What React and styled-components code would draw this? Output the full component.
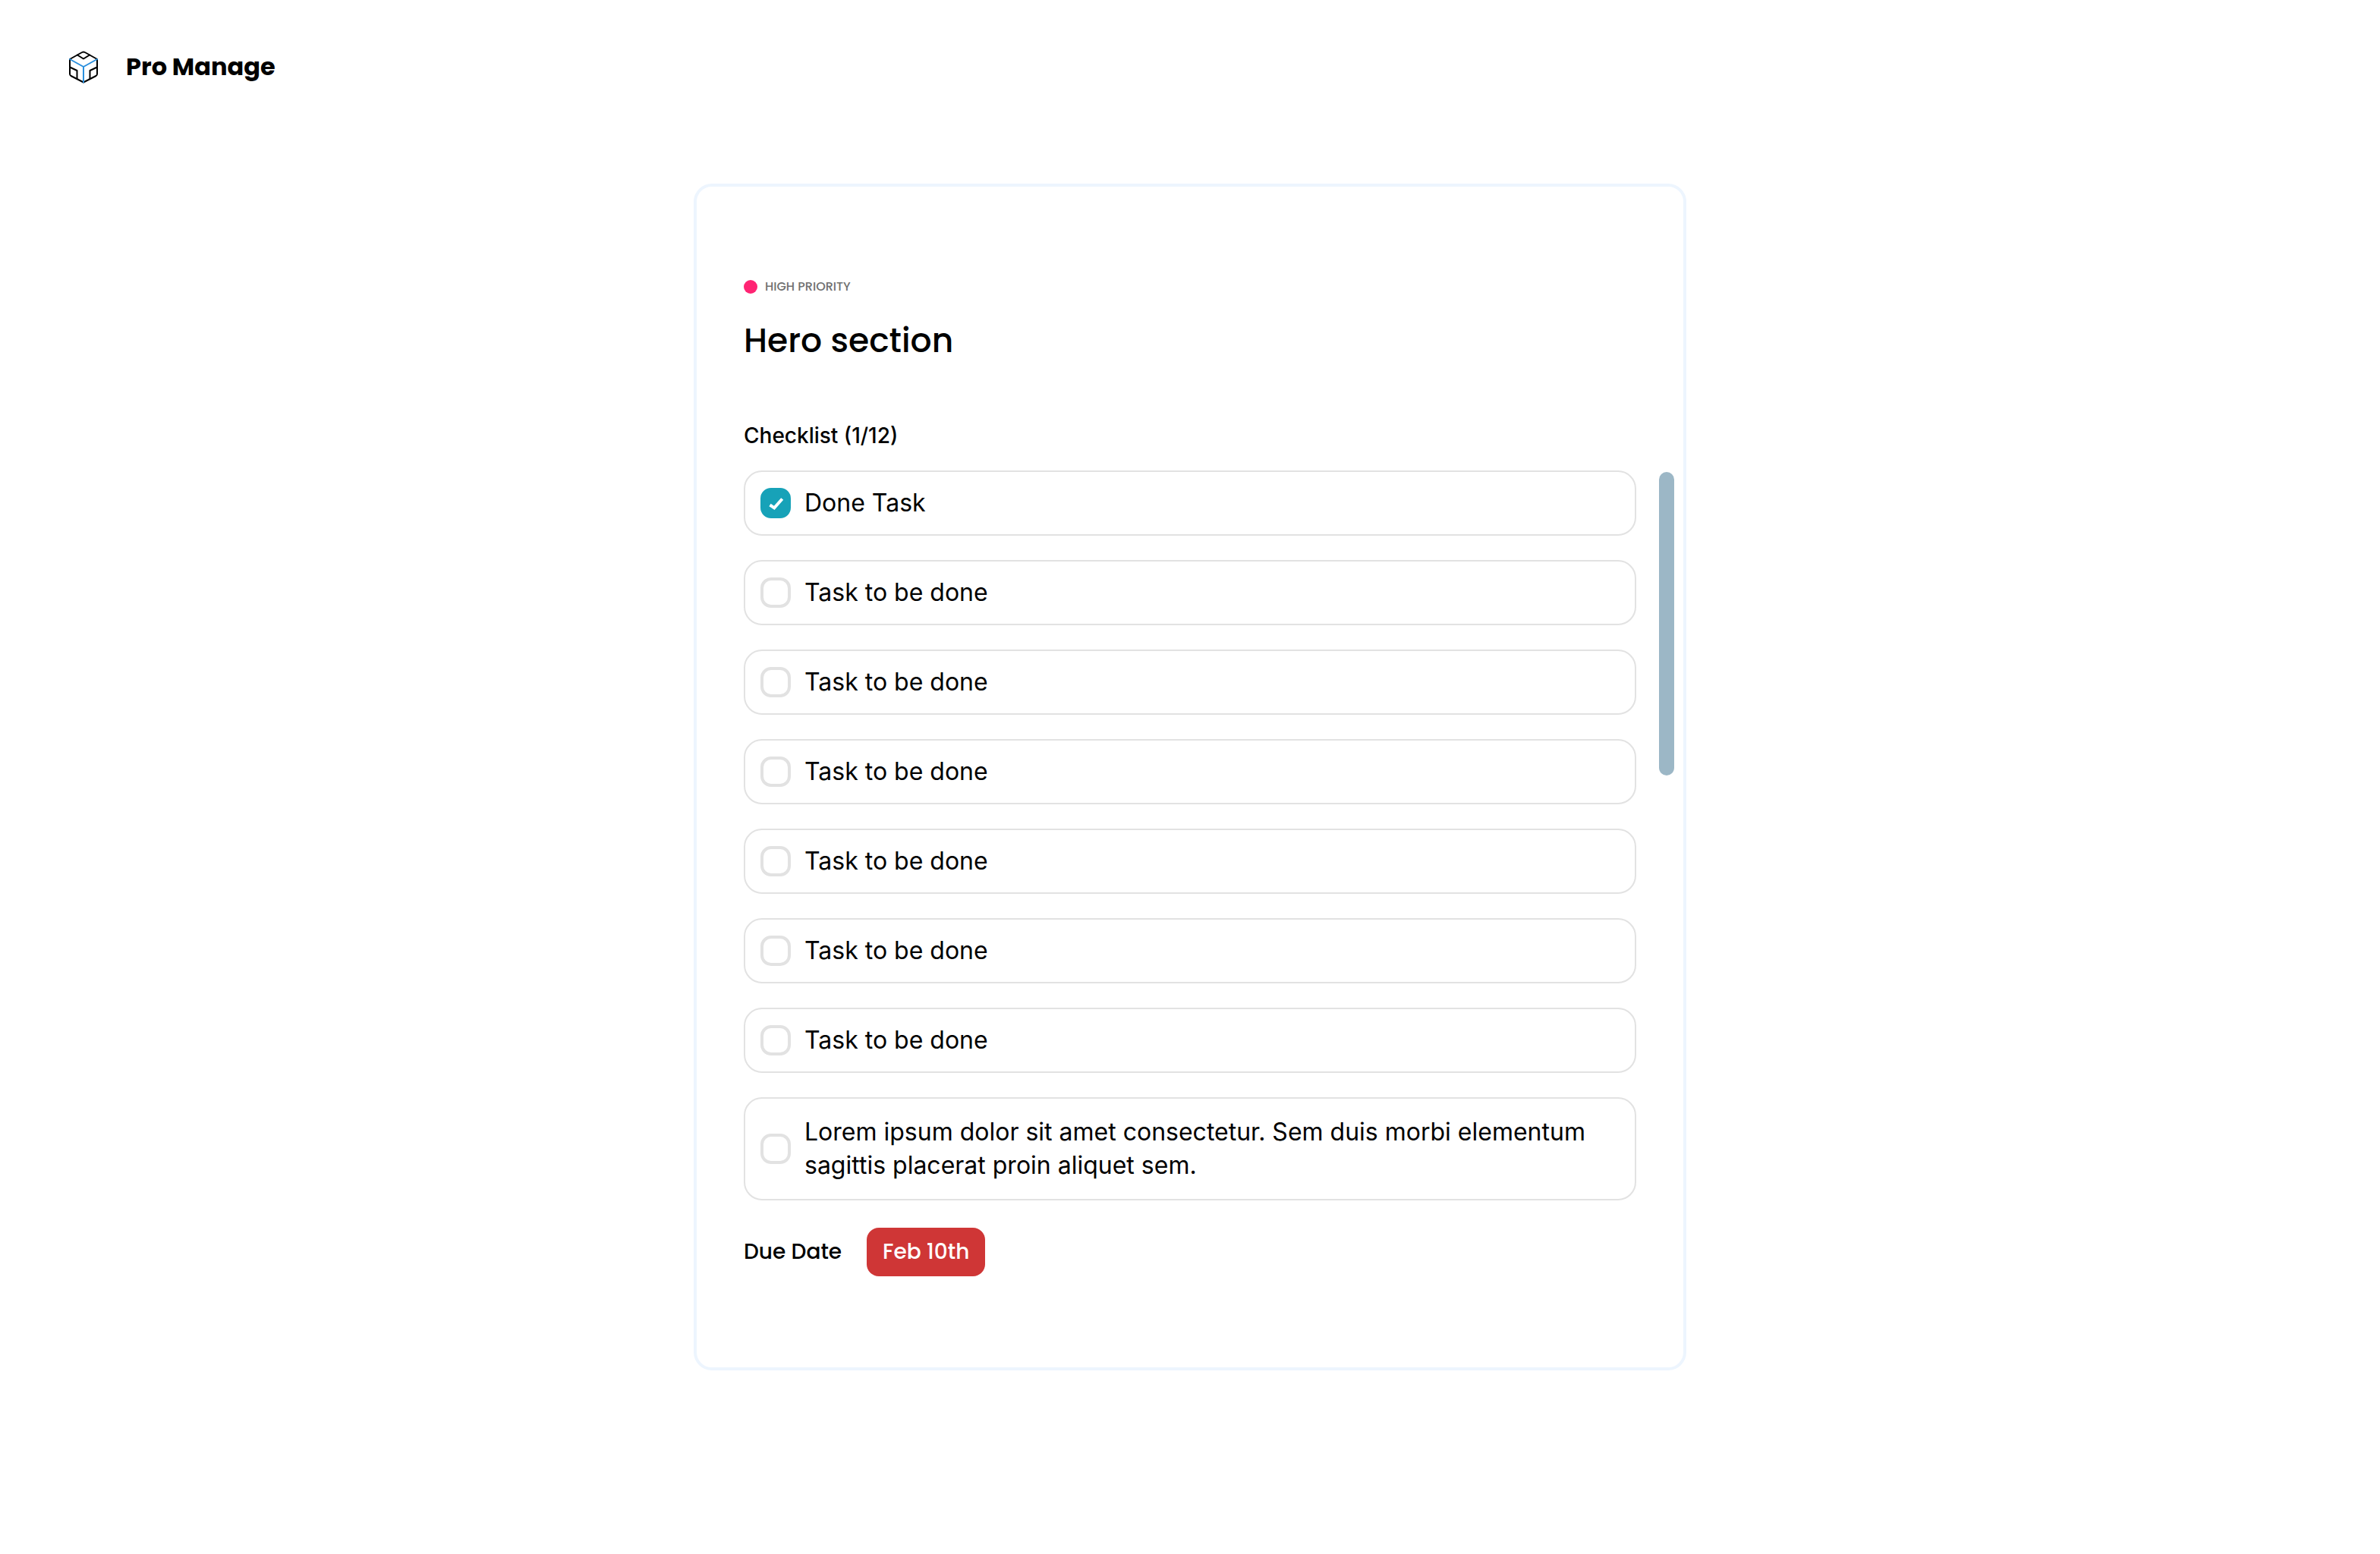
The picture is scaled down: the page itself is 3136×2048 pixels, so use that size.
import React, { useState } from "react";
import styled, { createGlobalStyle } from "styled-components";

const GlobalStyle = createGlobalStyle`
  *, *::before, *::after { box-sizing: border-box; }
  body {
    margin: 0;
    background: #ffffff;
    color: #000000;
    font-family: "Inter", sans-serif;
  }
`;

const heading = `font-family: "Poppins", "Inter", sans-serif;`;

const Header = styled.header`
  display: flex;
  align-items: center;
  gap: 34px;
  height: 176px;
  padding: 0 88px;
`;

const Logo = styled.svg`
  width: 44px;
  height: 44px;
  fill: none;
  stroke: #000000;
  stroke-width: 2;
  stroke-linecap: round;
  stroke-linejoin: round;
`;

const Brand = styled.span`
  ${heading}
  font-size: 32px;
  line-height: 48px;
  font-weight: 700;
`;

const Main = styled.main`
  display: flex;
  justify-content: center;
  padding: 66px 24px;
`;

const Card = styled.article`
  width: 100%;
  max-width: 1308px;
  padding: 120px 12px 120px 62px;
  border: 4px solid #edf5fe;
  border-radius: 24px;
`;

const Priority = styled.p`
  display: flex;
  align-items: center;
  gap: 10px;
  margin: 0 0 26px;
  ${heading}
  font-size: 16px;
  line-height: 24px;
  font-weight: 500;
  color: #707070;
`;

const Dot = styled.span`
  width: 18px;
  height: 18px;
  border-radius: 50%;
  background: #ff2473;
`;

const Title = styled.h1`
  margin: 0 0 71px;
  ${heading}
  font-size: 44px;
  line-height: 66px;
  font-weight: 500;
`;

const Subtitle = styled.h2`
  margin: 0 0 25px;
  font-size: 28px;
  line-height: 42px;
  font-weight: 500;
`;

const ListArea = styled.div`
  display: flex;
  gap: 30px;
`;

const List = styled.ul`
  flex: 1;
  display: flex;
  flex-direction: column;
  gap: 32px;
  margin: 0;
  padding: 0;
  list-style: none;
`;

const Track = styled.div`
  width: 20px;
  padding-top: 2px;
`;

const Thumb = styled.div`
  height: 400px;
  border-radius: 10px;
  background: #9cb7c6;
`;

const Task = styled.label`
  display: flex;
  align-items: center;
  gap: 18px;
  padding: ${(p) => (p.$long ? 22 : 19)}px 20px;
  border: 2px solid #e2e2e2;
  border-radius: 24px;
  font-size: 32px;
  line-height: 44px;
`;

const CheckCell = styled.span`
  flex: none;
  display: grid;
  width: 40px;
  height: 40px;
  > * { grid-area: 1 / 1; }
`;

const Check = styled.input`
  appearance: none;
  width: 40px;
  height: 40px;
  margin: 0;
  border: 4px solid #e2e2e2;
  border-radius: 14px;
  background: #ffffff;
  &:checked {
    border-color: #17a2b8;
    background: #17a2b8;
  }
`;

const Tick = styled.svg`
  width: 40px;
  height: 40px;
  fill: none;
  stroke: #ffffff;
  stroke-width: 4;
  pointer-events: none;
`;

const Due = styled.div`
  display: flex;
  align-items: center;
  gap: 33px;
  margin-top: 36px;
  ${heading}
  font-size: 28px;
  line-height: 42px;
  font-weight: 500;
`;

const DateChip = styled.time`
  padding: 11px 21px;
  border-radius: 16px;
  background: #cf3636;
  color: #ffffff;
`;

const LOREM =
  "Lorem ipsum dolor sit amet consectetur. Sem duis morbi elementum sagittis placerat proin aliquet sem.";

const initialTasks = [
  { text: "Done Task", done: true },
  ...Array.from({ length: 6 }, () => ({ text: "Task to be done", done: false })),
  { text: LOREM, done: false, long: true },
];

const TOTAL = 12;

export default function App() {
  const [tasks, setTasks] = useState(initialTasks);
  const done = tasks.filter((t) => t.done).length;
  const toggle = (i) =>
    setTasks((all) => all.map((t, k) => (k === i ? { ...t, done: !t.done } : t)));

  return (
    <>
      <GlobalStyle />
      <Header>
        <Logo viewBox="0 0 44 44" aria-hidden="true">
          <path d="M4 12 20 3Q22 1.800 24 3L40 12V31.500Q40 33 38.500 34L22 42.500 5.500 34Q4 33 4 31.500Z" />
          <path d="M14 6.500 22 11.500 30 6.500" />
          <path d="M4 22.500 13.500 27V37.500M40 22.500 30.500 27V37.500" />
          <path d="M4 12 22 22 40 12M22 22V42.500" stroke="#2a8fdd" />
        </Logo>
        <Brand>Pro Manage</Brand>
      </Header>
      <Main>
        <Card>
          <Priority>
            <Dot />
            HIGH PRIORITY
          </Priority>
          <Title>Hero section</Title>
          <Subtitle>{`Checklist (${done}/${TOTAL})`}</Subtitle>
          <ListArea>
            <List>
              {tasks.map((t, i) => (
                <li key={i}>
                  <Task $long={t.long}>
                    <CheckCell>
                      <Check type="checkbox" checked={t.done} onChange={() => toggle(i)} />
                      {t.done && (
                        <Tick viewBox="0 0 40 40" aria-hidden="true">
                          <path d="M12.500 22.500 18.200 26.300 28.700 14.500" />
                        </Tick>
                      )}
                    </CheckCell>
                    <span>{t.text}</span>
                  </Task>
                </li>
              ))}
            </List>
            <Track>
              <Thumb />
            </Track>
          </ListArea>
          <Due>
            <span>Due Date</span>
            <DateChip>Feb 10th</DateChip>
          </Due>
        </Card>
      </Main>
    </>
  );
}
